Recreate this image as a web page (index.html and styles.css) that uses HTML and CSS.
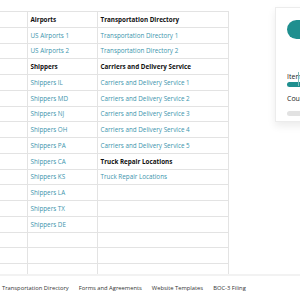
FILE: index.html
```html
<!DOCTYPE html>
<html>
	<head>
		<meta charset="utf-8">
		<title>Directory</title>
		<link rel="stylesheet" href="styles.css">
	</head>
	<body>
		<div class="page">
			<div class="main">
				<div class="grid-wrap">
					<table class="dir">
						<tr><td></td><th>Airports</th><th>Transportation Directory</th></tr>
						<tr><td></td><td><a href="#">US Airports 1</a></td><td><a href="#">Transportation Directory 1</a></td></tr>
						<tr><td></td><td><a href="#">US Airports 2</a></td><td><a href="#">Transportation Directory 2</a></td></tr>
						<tr><td></td><th>Shippers</th><th>Carriers and Delivery Service</th></tr>
						<tr><td></td><td><a href="#">Shippers IL</a></td><td><a href="#">Carriers and Delivery Service 1</a></td></tr>
						<tr><td></td><td><a href="#">Shippers MD</a></td><td><a href="#">Carriers and Delivery Service 2</a></td></tr>
						<tr><td></td><td><a href="#">Shippers NJ</a></td><td><a href="#">Carriers and Delivery Service 3</a></td></tr>
						<tr><td></td><td><a href="#">Shippers OH</a></td><td><a href="#">Carriers and Delivery Service 4</a></td></tr>
						<tr><td></td><td><a href="#">Shippers PA</a></td><td><a href="#">Carriers and Delivery Service 5</a></td></tr>
						<tr><td></td><td><a href="#">Shippers CA</a></td><th>Truck Repair Locations</th></tr>
						<tr><td></td><td><a href="#">Shippers KS</a></td><td><a href="#">Truck Repair Locations</a></td></tr>
						<tr><td></td><td><a href="#">Shippers LA</a></td><td></td></tr>
						<tr><td></td><td><a href="#">Shippers TX</a></td><td></td></tr>
						<tr><td></td><td><a href="#">Shippers DE</a></td><td></td></tr>
						<tr><td></td><td></td><td></td></tr>
						<tr><td></td><td></td><td></td></tr>
						<tr><td></td><td></td><td></td></tr>
					</table>
				</div>
				<div class="side">
					<div class="card">
						<div class="avatar"></div>
						<div class="label">Items per page</div>
						<div class="slider"><span class="thumb"></span></div>
						<div class="label">Count</div>
						<div class="slider off"></div>
					</div>
				</div>
			</div>
			<div class="footer">
				<a href="#">Transportation Directory</a>
				<a href="#">Forms and Agreements</a>
				<a href="#">Website Templates</a>
				<a href="#">BOC-3 Filing</a>
			</div>
		</div>
	</body>
</html>
```
FILE: styles.css
```css
*{margin: 0;padding: 0;box-sizing: border-box;}
body{
	font-family: "Open Sans", "Noto Sans", sans-serif;
	font-size: 6.3px;
	color: #222;
	background: #fff;
	overflow: hidden;
}
.page{width: 300px;height: 300px;display: flex;flex-direction: column;}
.main{
	height: 274px;
	display: flex;
	overflow: hidden;
}
.grid-wrap{
	width: 229px;
	padding-top: 11px;
	overflow: hidden;
	flex: none;
}
.dir{
	border-collapse: collapse;
	margin-left: -14px;
	table-layout: fixed;
	width: 243px;
}
.dir td,.dir th{
	border: 1px solid #e3e3e3;
	height: 15.75px;
	padding: 0 3px;
	text-align: left;
	white-space: nowrap;
	overflow: hidden;
	vertical-align: middle;
}
.dir tr>:first-child{width: 41px;border-left: 0;}
.dir tr>:nth-child(2){width: 70px;}
.dir th{font-weight: bold;color: #111;}
.dir a{color: #3d95ad;text-decoration: none;}
.side{flex: 1;padding: 7px 0 0 46px;}
.card{
	width: 60px;height: 115px;
	border: 1px solid #ececec;
	border-right: 0;
	box-shadow: 0 4px 8px rgba(0,0,0,0.08);
	padding: 12px 0 0 11px;
	overflow: hidden;
	white-space: nowrap;
	font-size: 7px;
}
.avatar{
	width: 28px;height: 19px;
	border-radius: 10px;
	background: #1f8f8f;
	margin-bottom: 33px;
}
.label{color: #222;margin-bottom: 1px;}
.slider{
	position: relative;
	width: 40px;height: 5px;
	border-radius: 3px;
	background: #1f8f8f;
	margin-bottom: 7px;
}
.slider .thumb{
	position: absolute;
	left: 11px;top: -10px;
	width: 1px;height: 14px;
	background: #7fbcbc;
}
.slider.off{background: #e2e2e2;margin-top: 8px;}
.footer{
	height: 26px;
	border-top: 2px solid #f2f2f2;
	display: flex;
	align-items: center;
	gap: 10px;
	padding-left: 2px;
}
.footer a{color: #333;text-decoration: none;font-size: 5.8px;}
```
